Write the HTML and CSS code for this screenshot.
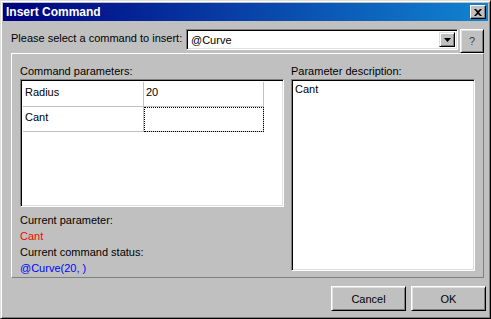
FILE: index.html
```html
<!DOCTYPE html>
<html lang="en">
<head>
    <meta charset="UTF-8">
    <title>Insert Command</title>
    <link rel="stylesheet" href="styles.css">
</head>
<body>
    <div class="window">
        <div class="titlebar">
            <span class="title">Insert Command</span>
            <button class="close-btn">
                <svg width="8" height="7" viewBox="0 0 8 7"><path d="M0 0h2l2 2 2-2h2L5 3.5 8 7H6L4 5 2 7H0l3-3.5z" fill="#000"/></svg>
            </button>
        </div>
        <div class="content">
            <div class="select-row">
                <label class="select-label">Please select a command to insert:</label>
                <div class="combo">
                    <span class="combo-text">@Curve</span>
                    <span class="combo-btn">
                        <svg width="7" height="4" viewBox="0 0 7 4"><path d="M0 0h7L3.5 4z" fill="#000"/></svg>
                    </span>
                </div>
                <button class="btn help-btn">?</button>
            </div>

            <div class="panel">
                <div class="params">
                    <div class="caption">Command parameters:</div>
                    <div class="grid">
                        <div class="grid-row">
                            <div class="cell">Radius</div>
                            <div class="cell">20</div>
                        </div>
                        <div class="grid-row">
                            <div class="cell">Cant</div>
                            <div class="cell focus"></div>
                        </div>
                    </div>
                    <div class="status">
                        <div>Current parameter:</div>
                        <div class="red">Cant</div>
                        <div>Current command status:</div>
                        <div class="blue">@Curve(20, )</div>
                    </div>
                </div>
                <div class="desc">
                    <div class="caption">Parameter description:</div>
                    <div class="desc-box">Cant</div>
                </div>
            </div>

            <div class="buttons">
                <button class="btn dlg-btn">Cancel</button>
                <button class="btn dlg-btn">OK</button>
            </div>
        </div>
    </div>
</body>
</html>
```

FILE: styles.css
```css
body { margin: 0; font-family: "Liberation Sans", Arial, sans-serif; font-size: 11px; color: #000; }
.window { width: 491px; height: 319px; box-sizing: border-box; background: #c0c0c0; border: 1px solid; border-color: #dfdfdf #000 #000 #dfdfdf; box-shadow: inset 1px 1px #fff, inset -1px -1px #808080; padding: 2px; }
.titlebar { height: 18px; display: flex; align-items: center; justify-content: space-between; background: linear-gradient(to right, #000080, #1084d0); padding: 0 2px 0 3px; }
.title { color: #fff; font-weight: bold; font-size: 12px; }
.close-btn { width: 16px; height: 14px; padding: 0; background: #c0c0c0; border: 1px solid; border-color: #fff #000 #000 #fff; box-shadow: inset -1px -1px #808080; display: flex; align-items: center; justify-content: center; }

.content { padding: 0 4px 0 8px; }
.select-row { display: flex; align-items: flex-start; margin-top: 8px; height: 24px; position: relative; z-index: 1; }
.select-label { width: 175px; line-height: 18px; }
.combo { width: 272px; height: 21px; box-sizing: border-box; background: #fff; border: 1px solid; border-color: #808080 #fff #fff #808080; box-shadow: inset 1px 1px #000, inset -1px -1px #dfdfdf; display: flex; align-items: center; justify-content: space-between; padding: 2px; }
.combo-text { padding-left: 2px; }
.combo-btn { width: 16px; height: 15px; box-sizing: border-box; background: #c0c0c0; border: 1px solid; border-color: #dfdfdf #000 #000 #dfdfdf; box-shadow: inset 1px 1px #fff, inset -1px -1px #808080; display: flex; align-items: center; justify-content: center; }
.btn { font-family: inherit; font-size: 11px; color: #000; background: #c0c0c0; box-sizing: border-box; border: 1px solid; border-color: #fff #000 #000 #fff; box-shadow: inset 1px 1px #dfdfdf, inset -1px -1px #808080; padding: 0; }
.help-btn { width: 24px; height: 24px; margin-left: 2px; color: #404040; }

.panel { display: flex; gap: 7px; height: 225px; box-sizing: border-box; border: 1px solid; border-color: #fff #808080 #808080 #fff; padding: 10px 8px 0 8px; }
.caption { line-height: 15px; }
.params { width: 264px; }
.grid { height: 128px; box-sizing: border-box; background: #fff; border: 1px solid; border-color: #808080 #fff #fff #808080; box-shadow: inset 1px 1px #000, inset -1px -1px #dfdfdf; padding: 2px; }
.grid-row { display: flex; height: 25px; box-sizing: border-box; }
.cell { width: 121px; box-sizing: border-box; border-right: 1px solid #c0c0c0; border-bottom: 1px solid #c0c0c0; padding: 3px 0 0 2px; line-height: 15px; }
.cell + .cell { width: 120px; }
.focus { outline: 1px dotted #000; outline-offset: -1px; }
.status { margin-top: 5px; line-height: 16px; }
.red { color: #ff0000; }
.blue { color: #0000ff; }
.desc { flex: 1; }
.desc-box { height: 192px; box-sizing: border-box; background: #fff; border: 1px solid; border-color: #808080 #fff #fff #808080; box-shadow: inset 1px 1px #000, inset -1px -1px #dfdfdf; padding: 3px 3px; line-height: 13px; }

.buttons { display: flex; justify-content: flex-end; gap: 5px; margin: 8px -2px 0 0; }
.dlg-btn { width: 75px; height: 25px; }
```
